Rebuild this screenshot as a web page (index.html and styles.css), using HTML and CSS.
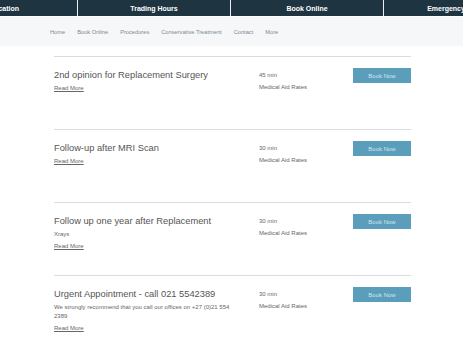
FILE: index.html
```html
<!DOCTYPE html>
<html>
<head>
  <title>Book Online</title>
  <link rel="stylesheet" href="styles.css">
</head>
<body>
  <div class="topbar">
    <div class="cell">Location</div>
    <div class="cell">Trading Hours</div>
    <div class="cell">Book Online</div>
    <div class="cell">Emergency Contact</div>
  </div>

  <nav class="menu">
    <a href="#">Home</a>
    <a href="#">Book Online</a>
    <a href="#">Procedures</a>
    <a href="#">Conservative Treatment</a>
    <a href="#">Contact</a>
    <a href="#">More</a>
  </nav>

  <div class="services">
    <div class="service">
      <div class="info">
        <h3>2nd opinion for Replacement Surgery</h3>
        <a href="#" class="more">Read More</a>
      </div>
      <div class="meta">
        <p>45 min</p>
        <p>Medical Aid Rates</p>
      </div>
      <button>Book Now</button>
    </div>

    <div class="service">
      <div class="info">
        <h3>Follow-up after MRI Scan</h3>
        <a href="#" class="more">Read More</a>
      </div>
      <div class="meta">
        <p>30 min</p>
        <p>Medical Aid Rates</p>
      </div>
      <button>Book Now</button>
    </div>

    <div class="service">
      <div class="info">
        <h3>Follow up one year after Replacement</h3>
        <p class="desc">Xrays</p>
        <a href="#" class="more">Read More</a>
      </div>
      <div class="meta">
        <p>30 min</p>
        <p>Medical Aid Rates</p>
      </div>
      <button>Book Now</button>
    </div>

    <div class="service">
      <div class="info">
        <h3>Urgent Appointment - call 021 5542389</h3>
        <p class="desc">We strongly recommend that you call our offices on +27 (0)21 554 2389</p>
        <a href="#" class="more">Read More</a>
      </div>
      <div class="meta">
        <p>30 min</p>
        <p>Medical Aid Rates</p>
      </div>
      <button>Book Now</button>
    </div>
  </div>
</body>
</html>
```

FILE: styles.css
```css
body {
  margin: 0;
  font-family: 'Liberation Sans', Arial, sans-serif;
  background: #fff;
  color: #555;
  overflow: hidden;
}
.topbar {
  display: flex;
  height: 16px;
  background: #1f3441;
  margin-left: -74px;
  width: 620px;
  border-bottom: 1px solid #fff;
}
.cell {
  flex: 0 0 152px;
  display: flex;
  align-items: center;
  justify-content: center;
  color: #fff;
  font-weight: bold;
  font-size: 7px;
  border-right: 1px solid #e9eef0;
}
.cell:first-child {
  padding-left: 6px;
  box-sizing: border-box;
}
.menu {
  display: flex;
  gap: 12px;
  height: 29px;
  align-items: center;
  padding-left: 50px;
  background: #f6f7f8;
}
.menu a {
  color: #7d8a90;
  text-decoration: none;
  font-size: 5.7px;
}
.services {
  margin: 10px 0 0 54px;
  width: 357px;
}
.service {
  display: grid;
  grid-template-columns: 205px 94px 58px;
  border-top: 1px solid #dcdcdc;
  padding-top: 11px;
  height: 61px;
}
.info {
  padding-right: 22px;
}
.info h3 {
  margin: 1px 0 2px;
  font-size: 9.3px;
  font-weight: normal;
  color: #555;
  line-height: 13px;
}
.desc {
  margin: 0 0 3px;
  font-size: 6px;
  line-height: 9px;
  color: #666;
}
.more {
  display: block;
  font-size: 6px;
  color: #666;
  line-height: 9px;
}
.meta {
  padding-top: 3px;
}
.meta p {
  margin: 0 0 3px;
  font-size: 6px;
  line-height: 9px;
  color: #666;
}
button {
  height: 15px;
  background: #5b9ebc;
  color: #cfe4ee;
  border: none;
  font-family: 'Liberation Sans', Arial, sans-serif;
  font-size: 6px;
  padding: 0;
}
```
